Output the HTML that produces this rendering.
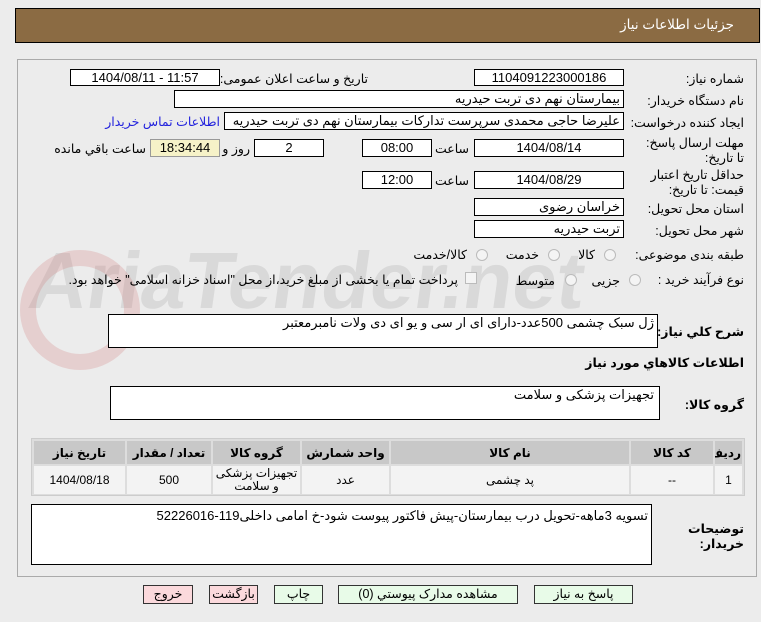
<!DOCTYPE html>
<html><head><meta charset="utf-8"><style>
body{margin:0;width:761px;height:622px;background:#ececec;font-family:"Liberation Sans","DejaVu Sans",sans-serif;font-size:12px;color:#000;position:relative;overflow:hidden}
.a{position:absolute;white-space:nowrap}
.box{position:absolute;background:#fff;border:1px solid #000;box-sizing:border-box;font-size:13px;line-height:15px;text-align:center;direction:rtl}
.ltr{direction:ltr}
.lbl{position:absolute;direction:rtl;text-align:right;font-size:12.5px}
.r{position:absolute;width:12px;height:12px;border-radius:50%;border:1px solid #bbb;background:#f4f4f4;box-sizing:border-box}
.btn{position:absolute;top:585px;height:19px;border:1px solid #333;box-sizing:border-box;text-align:center;font-size:12.5px;line-height:17px;direction:rtl}
table{border-collapse:separate;border-spacing:2px;table-layout:fixed}
td{font-size:12px;text-align:center;overflow:hidden}
</style></head><body>
<div class="a" style="left:15px;top:8px;width:745px;height:35px;background:#8b6b43;border:1px solid #000;box-sizing:border-box"></div>
<div class="a" style="right:27px;top:17px;color:#fff;font-size:13.5px;direction:rtl">جزئیات اطلاعات نیاز</div>
<div class="a" style="left:17px;top:59px;width:740px;height:518px;border:1px solid #aaa;box-sizing:border-box"></div>
<div class="a" style="left:30px;top:235px;font-size:80px;font-weight:bold;color:rgba(160,160,160,0.25);transform:skewX(-8deg)">AriaTender.net</div>
<div class="a" style="left:20px;top:250px;width:120px;height:120px;border-radius:50%;border:16px solid rgba(200,80,80,0.18);box-sizing:border-box"></div>

<div class="lbl" style="right:17px;top:71px">شماره نیاز:</div>
<div class="box ltr" style="left:474px;top:69px;width:150px;height:17px">1104091223000186</div>
<div class="lbl" style="right:393px;top:71px">تاریخ و ساعت اعلان عمومی:</div>
<div class="box ltr" style="left:70px;top:69px;width:150px;height:17px">1404/08/11 - 11:57</div>

<div class="lbl" style="right:17px;top:93px">نام دستگاه خریدار:</div>
<div class="box" style="left:174px;top:90px;width:450px;height:18px;text-align:right;padding-right:3px">بیمارستان نهم دی تربت حیدریه</div>

<div class="lbl" style="right:17px;top:115px">ایجاد کننده درخواست:</div>
<div class="box" style="left:224px;top:112px;width:400px;height:18px;text-align:right;padding-right:3px">علیرضا حاجی محمدی سرپرست تدارکات بیمارستان نهم دی تربت حیدریه</div>
<div class="lbl" style="right:541px;top:114px;color:#2222dd">اطلاعات تماس خریدار</div>

<div class="lbl" style="right:17px;top:136px;width:100px;line-height:15px">مهلت ارسال پاسخ: تا تاریخ:</div>
<div class="box ltr" style="left:474px;top:139px;width:150px;height:18px">1404/08/14</div>
<div class="lbl" style="right:292px;top:141px">ساعت</div>
<div class="box ltr" style="left:362px;top:139px;width:70px;height:18px">08:00</div>
<div class="box ltr" style="left:254px;top:139px;width:70px;height:18px">2</div>
<div class="lbl" style="right:511px;top:141px">روز و</div>
<div class="box ltr" style="left:150px;top:139px;width:70px;height:18px;background:#f6f2c8;border-color:#999">18:34:44</div>
<div class="lbl" style="right:615px;top:141px">ساعت باقي مانده</div>

<div class="lbl" style="right:17px;top:168px;width:100px;line-height:15px">حداقل تاریخ اعتبار قیمت: تا تاریخ:</div>
<div class="box ltr" style="left:474px;top:171px;width:150px;height:18px">1404/08/29</div>
<div class="lbl" style="right:292px;top:173px">ساعت</div>
<div class="box ltr" style="left:362px;top:171px;width:70px;height:18px">12:00</div>

<div class="lbl" style="right:17px;top:201px">استان محل تحویل:</div>
<div class="box" style="left:474px;top:198px;width:150px;height:18px;text-align:right;padding-right:3px">خراسان رضوی</div>
<div class="lbl" style="right:17px;top:223px">شهر محل تحویل:</div>
<div class="box" style="left:474px;top:220px;width:150px;height:18px;text-align:right;padding-right:3px">تربت حیدریه</div>

<div class="lbl" style="right:17px;top:247px">طبقه بندی موضوعی:</div>
<div class="r" style="left:604px;top:249px"></div><div class="lbl" style="right:166px;top:247px">کالا</div>
<div class="r" style="left:548px;top:249px"></div><div class="lbl" style="right:222px;top:247px">خدمت</div>
<div class="r" style="left:476px;top:249px"></div><div class="lbl" style="right:294px;top:247px">کالا/خدمت</div>

<div class="lbl" style="right:17px;top:272px">نوع فرآیند خرید :</div>
<div class="r" style="left:629px;top:274px"></div><div class="lbl" style="right:141px;top:273px">جزیی</div>
<div class="r" style="left:565px;top:274px"></div><div class="lbl" style="right:206px;top:273px">متوسط</div>
<div class="a" style="left:465px;top:272px;width:12px;height:12px;border:1px solid #bbb;background:#f4f4f4;box-sizing:border-box"></div>
<div class="lbl" style="right:303px;top:272px">پرداخت تمام یا بخشی از مبلغ خرید،از محل "اسناد خزانه اسلامی" خواهد بود.</div>

<div class="lbl" style="right:17px;top:324px;font-weight:bold">شرح کلي نياز:</div>
<div class="box" style="left:108px;top:314px;width:550px;height:34px;text-align:right;padding-right:3px">ژل سبک چشمی 500عدد-دارای ای ار سی و یو ای دی ولات نامبرمعتبر</div>
<div class="lbl" style="right:17px;top:355px;font-weight:bold">اطلاعات کالاهاي مورد نياز</div>
<div class="lbl" style="right:17px;top:397px;font-weight:bold">گروه کالا:</div>
<div class="box" style="left:110px;top:386px;width:550px;height:34px;text-align:right;padding-right:5px">تجهیزات پزشکی و سلامت</div>

<div class="a" style="left:31px;top:438px;width:714px;height:58px;background:#ddd;border:1px solid #ccc;box-sizing:border-box;white-space:normal">
<table dir="rtl" style="width:100%;height:100%">
<colgroup><col style="width:27px"><col style="width:82px"><col style="width:238px"><col style="width:87px"><col style="width:87px"><col style="width:84px"><col></colgroup>
<tr style="background:#c8c8c8;font-weight:bold;height:23px"><td>ردیف</td><td>کد کالا</td><td>نام کالا</td><td>واحد شمارش</td><td>گروه کالا</td><td>تعداد / مقدار</td><td>تاریخ نیاز</td></tr>
<tr style="background:#f3f3f3"><td>1</td><td>--</td><td>پد چشمی</td><td>عدد</td><td style="line-height:13px;white-space:normal">تجهیزات پزشکی و سلامت</td><td>500</td><td>1404/08/18</td></tr>
</table></div>

<div class="lbl" style="right:17px;top:522px;font-weight:bold;width:70px;line-height:15px">توضیحات خریدار:</div>
<div class="box" style="left:31px;top:504px;width:621px;height:61px;text-align:right;padding-right:3px;padding-top:3px">تسویه 3ماهه-تحویل درب بیمارستان-پیش فاکتور پیوست شود-خ امامی داخلی119-52226016</div>

<div class="btn" style="left:534px;width:99px;background:#e8fbe8">پاسخ به نیاز</div>
<div class="btn" style="left:338px;width:180px;background:#e8fbe8">مشاهده مدارک پیوستي (0)</div>
<div class="btn" style="left:274px;width:49px;background:#e8fbe8">چاپ</div>
<div class="btn" style="left:209px;width:49px;background:#fbd9dc">بازگشت</div>
<div class="btn" style="left:143px;width:50px;background:#fbd9dc">خروج</div>
</body></html>
